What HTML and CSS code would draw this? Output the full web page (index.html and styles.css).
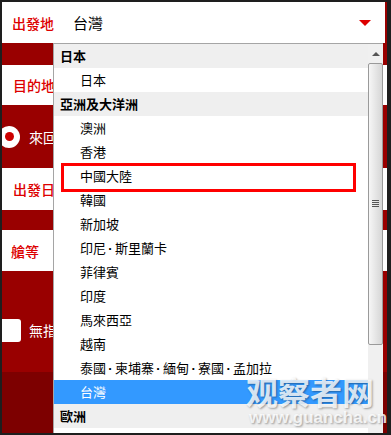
FILE: index.html
```html
<!DOCTYPE html>
<html lang="zh-Hant">
<head>
  <meta charset="UTF-8" />
  <meta name="viewport" content="width=device-width, initial-scale=1" />
  <title>訂票</title>
  <link rel="stylesheet" href="styles.css">
</head>
<body>
  <div class="page">
    <div class="header">
      <span class="field-label">出發地</span>
      <span class="field-value">台灣</span>
      <span class="caret"></span>
    </div>

    <div class="band dark gap-top"></div>
    <div class="band light row-dest"><span class="label">目的地</span></div>
    <div class="band dark row-trip">
      <span class="radio"><span class="radio-dot"></span></span>
      <span class="band-text">來回</span>
    </div>
    <div class="band light row-date"><span class="label">出發日</span></div>
    <div class="band dark gap-mid"></div>
    <div class="band light row-class"><span class="label">艙等</span></div>
    <div class="band dark row-check">
      <span class="checkbox"></span>
      <span class="band-text">無指定</span>
    </div>
    <div class="band darker row-bottom"></div>

    <div class="dropdown">
      <ul class="options">
        <li class="group">日本</li>
        <li class="option">日本</li>
        <li class="group">亞洲及大洋洲</li>
        <li class="option">澳洲</li>
        <li class="option">香港</li>
        <li class="option marked">中國大陸</li>
        <li class="option">韓國</li>
        <li class="option">新加坡</li>
        <li class="option">印尼<span class="dot">·</span>斯里蘭卡</li>
        <li class="option">菲律賓</li>
        <li class="option">印度</li>
        <li class="option">馬來西亞</li>
        <li class="option">越南</li>
        <li class="option">泰國<span class="dot">·</span>柬埔寨<span class="dot">·</span>緬甸<span class="dot">·</span>寮國<span class="dot">·</span>孟加拉</li>
        <li class="option selected">台灣</li>
        <li class="group">歐洲</li>
      </ul>
      <div class="scrollbar">
        <div class="scroll-up"><span class="arrow-up"></span></div>
        <div class="scroll-thumb"><span class="grip"></span></div>
      </div>
    </div>

    <div class="watermark">
      <div class="wm-title">观察者网</div>
      <div class="wm-url">www.guancha.cn</div>
    </div>
  </div>
</body>
</html>
```

FILE: styles.css
```css
* {
  box-sizing: border-box;
}

body {
  margin: 0;
  background: #1e1e1e;
  font-family: "Noto Sans CJK TC", "Noto Sans", sans-serif;
  overflow: hidden;
}

.page {
  position: relative;
  width: 385px;
  height: 431px;
  margin: 2px 0 0 2px;
  background: #990000;
  overflow: hidden;
}

/* top select field */
.header {
  height: 41px;
  background: #fff;
  border-right: 2px solid #990000;
  display: flex;
  align-items: center;
  padding: 0 14px 0 10px;
}

.field-label {
  width: 61px;
  color: #dd0000;
  font-size: 14px;
  font-weight: 500;
}

.field-value {
  color: #000;
  font-size: 15px;
}

.caret {
  margin-left: auto;
  width: 0;
  height: 0;
  border-left: 6px solid transparent;
  border-right: 6px solid transparent;
  border-top: 6px solid #dd0000;
}

/* form rows behind the list */
.band {
  display: flex;
  align-items: center;
  padding-left: 11px;
}

.dark {
  background: #990000;
}

.darker {
  background: #7d0000;
}

.light {
  background: #fff;
}

.gap-top { height: 22px; }
.row-dest { height: 40px; }
.row-trip { height: 63px; padding-left: 0; }
.row-date { height: 42px; }
.row-class { height: 41px; padding-left: 9px; }
.row-check { height: 101px; padding-left: 0; padding-top: 17px; }
.row-bottom { height: 61px; }
.gap-mid { height: 20px; }

.label {
  color: #dd0000;
  font-size: 14px;
  font-weight: 500;
}

.band-text {
  color: #fff;
  font-size: 14px;
}

.radio {
  width: 22px;
  height: 22px;
  margin: 0 9px 0 -4px;
  border-radius: 50%;
  background: #fff;
  display: flex;
  align-items: center;
  justify-content: center;
}

.radio-dot {
  width: 9px;
  height: 9px;
  border-radius: 50%;
  background: #cc0000;
}

.checkbox {
  width: 21px;
  height: 23px;
  margin: 0 8px 0 -2px;
  border-radius: 3px;
  background: #fff;
}

/* open list */
.dropdown {
  position: absolute;
  left: 51px;
  top: 41px;
  width: 330px;
  height: 400px;
  background: #fff;
  border-left: 1px solid #a5a5a5;
  border-top: 1px solid #a5a5a5;
  display: flex;
}

.options {
  flex: 1;
  list-style: none;
  margin: 0;
  padding: 0;
  font-size: 13px;
  color: #000;
}

.options li {
  height: 24px;
  line-height: 24px;
  white-space: nowrap;
}

.group {
  background: #efefef;
  font-weight: bold;
  padding-left: 6px;
}

.option {
  position: relative;
  padding-left: 26px;
}

.option.selected {
  background: #3399ff;
  color: #fff;
}

.option.marked::after {
  content: "";
  position: absolute;
  left: 7px;
  top: -1px;
  width: 289px;
  height: 23px;
  border: 3px solid #ff0000;
}

.dot {
  display: inline-block;
  width: 9px;
  font-family: "Liberation Sans", Arial, sans-serif;
  font-weight: bold;
  text-align: center;
}

.scrollbar {
  width: 15px;
  background: #f0f0f0;
  display: flex;
  flex-direction: column;
}

.scroll-up {
  height: 19px;
  display: flex;
  align-items: center;
  justify-content: center;
}

.arrow-up {
  width: 0;
  height: 0;
  border-left: 4px solid transparent;
  border-right: 4px solid transparent;
  border-bottom: 4px solid #555;
}

.scroll-thumb {
  height: 282px;
  border: 1px solid #9a9a9a;
  border-radius: 2px;
  background: linear-gradient(to right, #f6f6f6, #d6d6d6);
  display: flex;
  align-items: center;
  justify-content: center;
}

.grip {
  width: 7px;
  height: 8px;
  background: repeating-linear-gradient(to bottom, #555 0 1px, transparent 1px 2px);
}

/* watermark over the corner */
.watermark {
  position: absolute;
  left: 244px;
  top: 373px;
  color: rgba(255, 255, 255, 0.82);
  text-shadow: 1px 1px 2px rgba(0, 0, 0, 0.35);
}

.wm-title {
  font-family: "Noto Sans CJK SC", sans-serif;
  font-size: 32px;
  font-weight: bold;
  line-height: 32px;
}

.wm-url {
  font-family: "Liberation Sans", Arial, sans-serif;
  font-size: 17px;
  font-weight: bold;
  line-height: 22px;
  padding-left: 3px;
}
```
